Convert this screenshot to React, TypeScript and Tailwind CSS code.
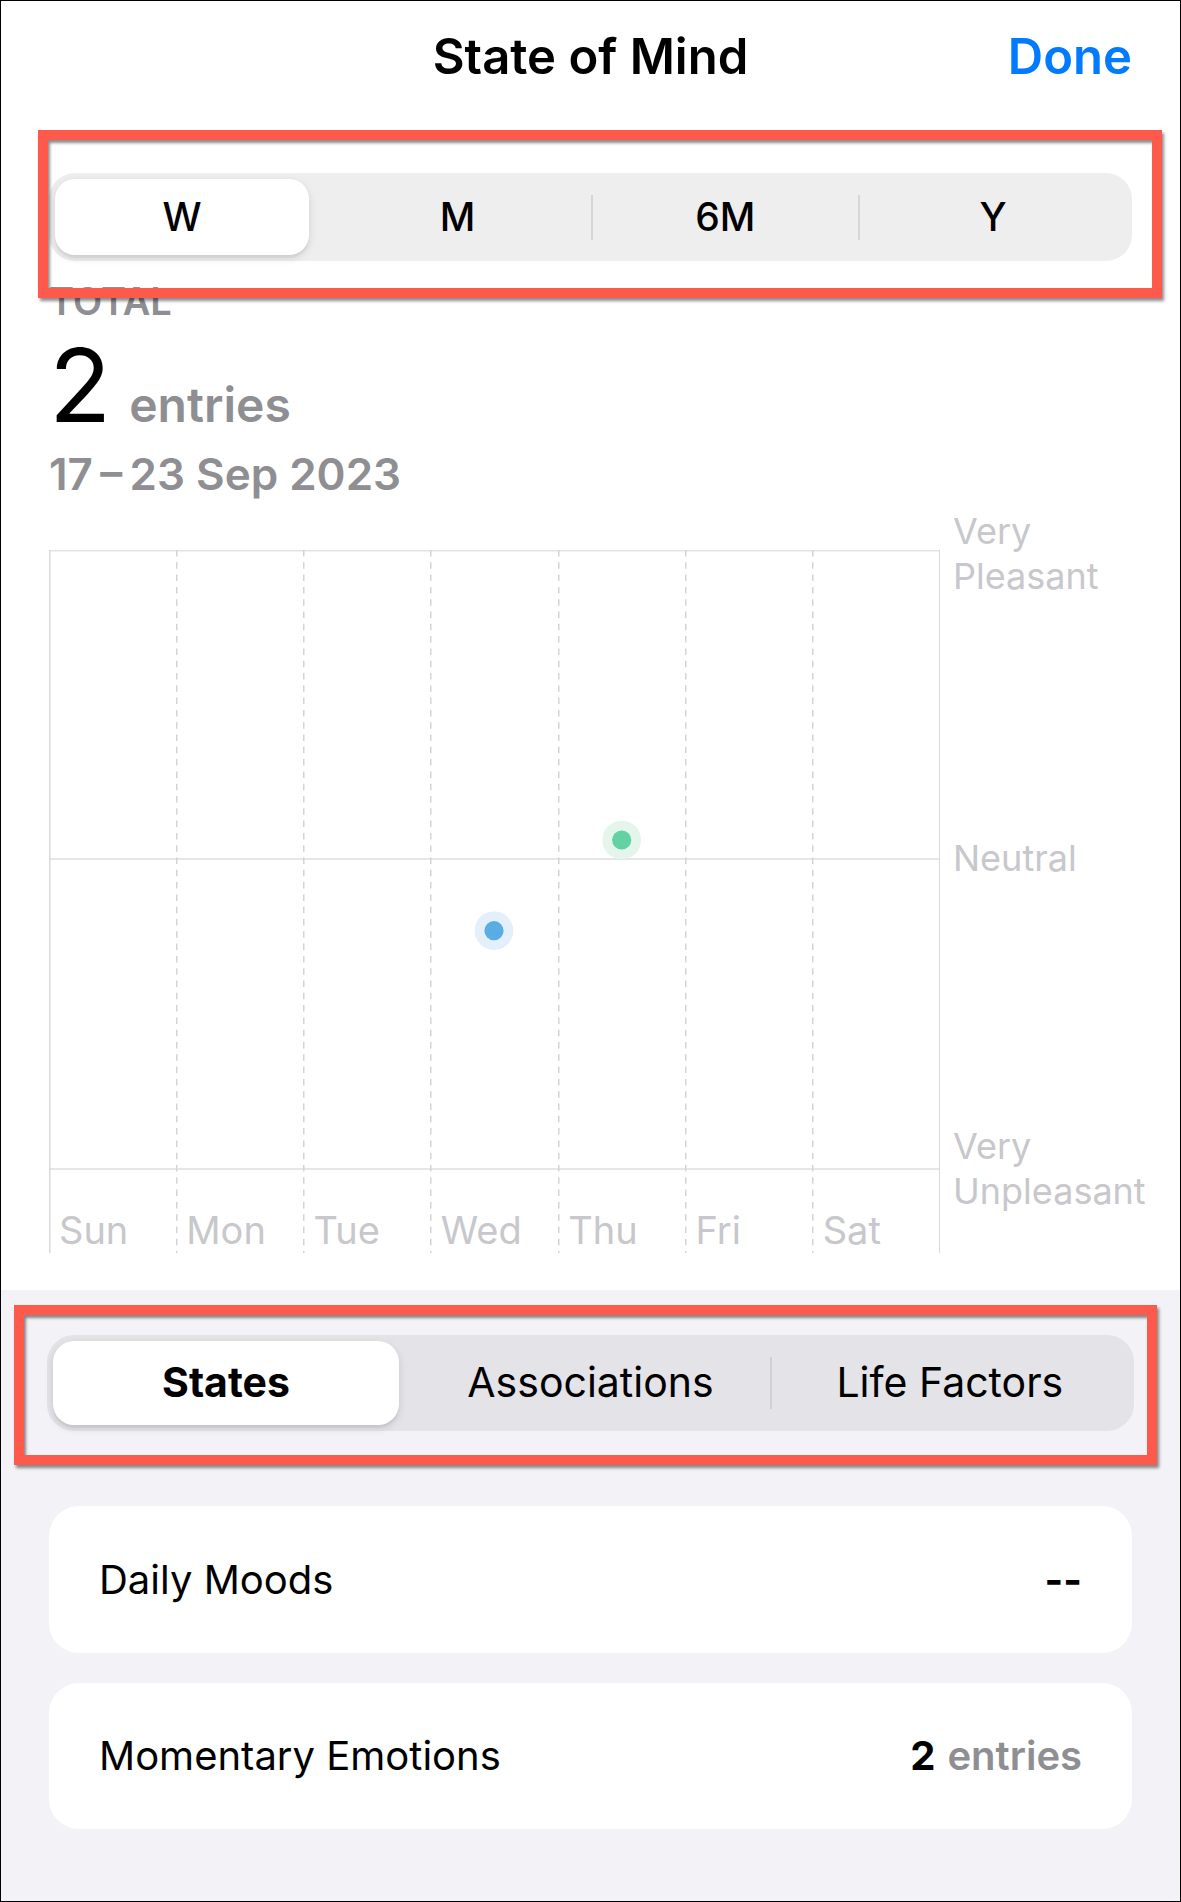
import React from 'react';

const days = ['Sun', 'Mon', 'Tue', 'Wed', 'Thu', 'Fri', 'Sat'];
const gridX = [0, 127, 254, 381, 509, 636, 763, 890];

const MoodChart: React.FC = () => {
  return (
    <div className="relative w-[891px] h-[703px] mt-[41px] shrink-0">
      <svg width="891" height="703" viewBox="0 0 891 703" className="block">
        <line x1="0" y1="0.75" x2="891" y2="0.75" stroke="#E3E3E6" strokeWidth="1.5" />
        <line x1="0" y1="309" x2="891" y2="309" stroke="#E5E5EA" strokeWidth="2" />
        <line x1="0" y1="619" x2="891" y2="619" stroke="#E5E5EA" strokeWidth="2" />
        {gridX.map((x, i) =>
          i === 0 || i === gridX.length - 1 ? (
            <line key={x} x1={x + 0.75} y1="0" x2={x + 0.75} y2="703" stroke="#DADADD" strokeWidth="1.5" />
          ) : (
            <line
              key={x}
              x1={x + 0.75}
              y1="0"
              x2={x + 0.75}
              y2="703"
              stroke="#D4D4D8"
              strokeWidth="1.5"
              strokeDasharray="6.5 5.8"
            />
          )
        )}
        {/* Thu entry */}
        <circle cx="572.7" cy="290" r="19.3" fill="#E4F6EC" />
        <circle cx="572.7" cy="290" r="9.6" fill="#62D2A2" />
        {/* Wed entry */}
        <circle cx="445" cy="380.7" r="19.3" fill="#E3EFFA" />
        <circle cx="445" cy="380.7" r="9.6" fill="#58ADE2" />
      </svg>
      <div className="absolute left-0 right-0 bottom-0 h-[84px] grid grid-cols-7">
        {days.map((d) => (
          <div key={d} className="flex items-end pl-[10px] text-[38px] leading-[46px] text-[#C7C7CC]">
            {d}
          </div>
        ))}
      </div>
    </div>
  );
};

const RangeControl: React.FC = () => {
  const items = ['W', 'M', '6M', 'Y'];
  return (
    <div className="grid grid-cols-4 h-[88px] rounded-[26px] bg-[#EEEEEF] p-[6px]">
      {items.map((item, i) =>
        i === 0 ? (
          <div key={item} className="flex">
            <div className="w-[254px] h-full rounded-[20px] bg-white shadow-[0_3px_8px_rgba(0,0,0,0.12),0_3px_1px_rgba(0,0,0,0.04)] flex items-center justify-center text-[39px] font-medium text-black">
              {item}
            </div>
          </div>
        ) : (
          <div key={item} className="flex items-center">
            {i > 1 ? <div className="w-[2px] h-[45px] bg-[#D6D6D9]" /> : <div className="w-[2px]" />}
            <div className="flex-1 text-center text-[39px] font-medium text-black">{item}</div>
          </div>
        )
      )}
    </div>
  );
};

const CategoryControl: React.FC = () => {
  return (
    <div className="grid grid-cols-3 h-[96px] rounded-[27px] bg-[#E3E3E8] p-[6px]">
      <div className="flex">
        <div className="w-[346px] h-full rounded-[21px] bg-white shadow-[0_3px_8px_rgba(0,0,0,0.12),0_3px_1px_rgba(0,0,0,0.04)] flex items-center justify-center text-[41px] font-bold text-black">
          States
        </div>
      </div>
      <div className="flex items-center justify-center text-[41px] text-black">Associations</div>
      <div className="flex items-center">
        <div className="w-[2px] h-[52px] bg-[#CFCFD4]" />
        <div className="flex-1 text-center text-[41px] text-black">Life Factors</div>
      </div>
    </div>
  );
};

const App: React.FC = () => {
  return (
    <div className="relative w-[1181px] h-[1902px] border border-black overflow-hidden flex flex-col font-[family-name:Inter,'Noto_Sans',sans-serif]">
      {/* top sheet */}
      <div className="h-[1289px] shrink-0 bg-white flex flex-col">
        <div className="grid grid-cols-[1fr_auto_1fr] items-center pt-[26px] px-[48px] leading-[60px]">
          <div />
          <div className="text-[49px] font-semibold text-black">State of Mind</div>
          <div className="justify-self-end text-[49px] font-semibold text-[#007AFF]">Done</div>
        </div>

        <div className="mt-[86px] px-[48px]">
          <RangeControl />
        </div>

        <div className="px-[48px]">
          <div className="mt-[17px] text-[38px] leading-[46px] font-semibold text-[#8E8E93]">TOTAL</div>
          <div className="mt-[6px] h-[110px] flex items-baseline">
            <span className="text-[102px] leading-[110px] text-black">2</span>
            <span className="ml-[18px] text-[48px] leading-[48px] font-semibold text-[#8E8E93]">entries</span>
          </div>
          <div className="mt-[8px] text-[44px] leading-[52px] font-semibold text-[#8E8E93]">17&#8201;–&#8201;23 Sep 2023</div>
        </div>

        <div className="mt-[9px] flex pl-[48px]">
          <MoodChart />
          <div className="flex-1 flex flex-col pl-[13px] text-[36px] leading-[45px] text-[#C7C7CC]">
            <div>
              Very
              <br />
              Pleasant
            </div>
            <div className="mt-[237px]">Neutral</div>
            <div className="mt-[243px]">
              Very
              <br />
              Unpleasant
            </div>
          </div>
        </div>
      </div>

      {/* grouped section */}
      <div className="flex-1 bg-[#F2F2F7] flex flex-col">
        <div className="mt-[45px] mx-[46px]">
          <CategoryControl />
        </div>

        <div className="mt-[75px] mx-[48px] flex flex-col gap-[30px]">
          <div className="h-[147px] rounded-[30px] bg-white px-[50px] flex items-center justify-between text-[40px] text-black">
            <span>Daily Moods</span>
            <span className="font-bold">--</span>
          </div>
          <div className="h-[146px] rounded-[30px] bg-white px-[50px] flex items-center justify-between text-[40px] text-black">
            <span>Momentary Emotions</span>
            <span>
              <span className="font-bold">2</span>
              <span className="ml-[12px] font-semibold text-[#8E8E93]">entries</span>
            </span>
          </div>
        </div>
      </div>

      {/* annotation frames */}
      <div className="absolute left-[37px] top-[129px] w-[1124px] h-[168px] border-[10px] border-[#FE5A4B] shadow-[2px_3px_3px_rgba(0,0,0,0.45),inset_2px_3px_3px_rgba(0,0,0,0.45)] pointer-events-none" />
      <div className="absolute left-[13px] top-[1304px] w-[1143px] h-[160px] border-[10px] border-[#FE5A4B] shadow-[2px_3px_3px_rgba(0,0,0,0.45),inset_2px_3px_3px_rgba(0,0,0,0.45)] pointer-events-none" />
    </div>
  );
};

export default App;
